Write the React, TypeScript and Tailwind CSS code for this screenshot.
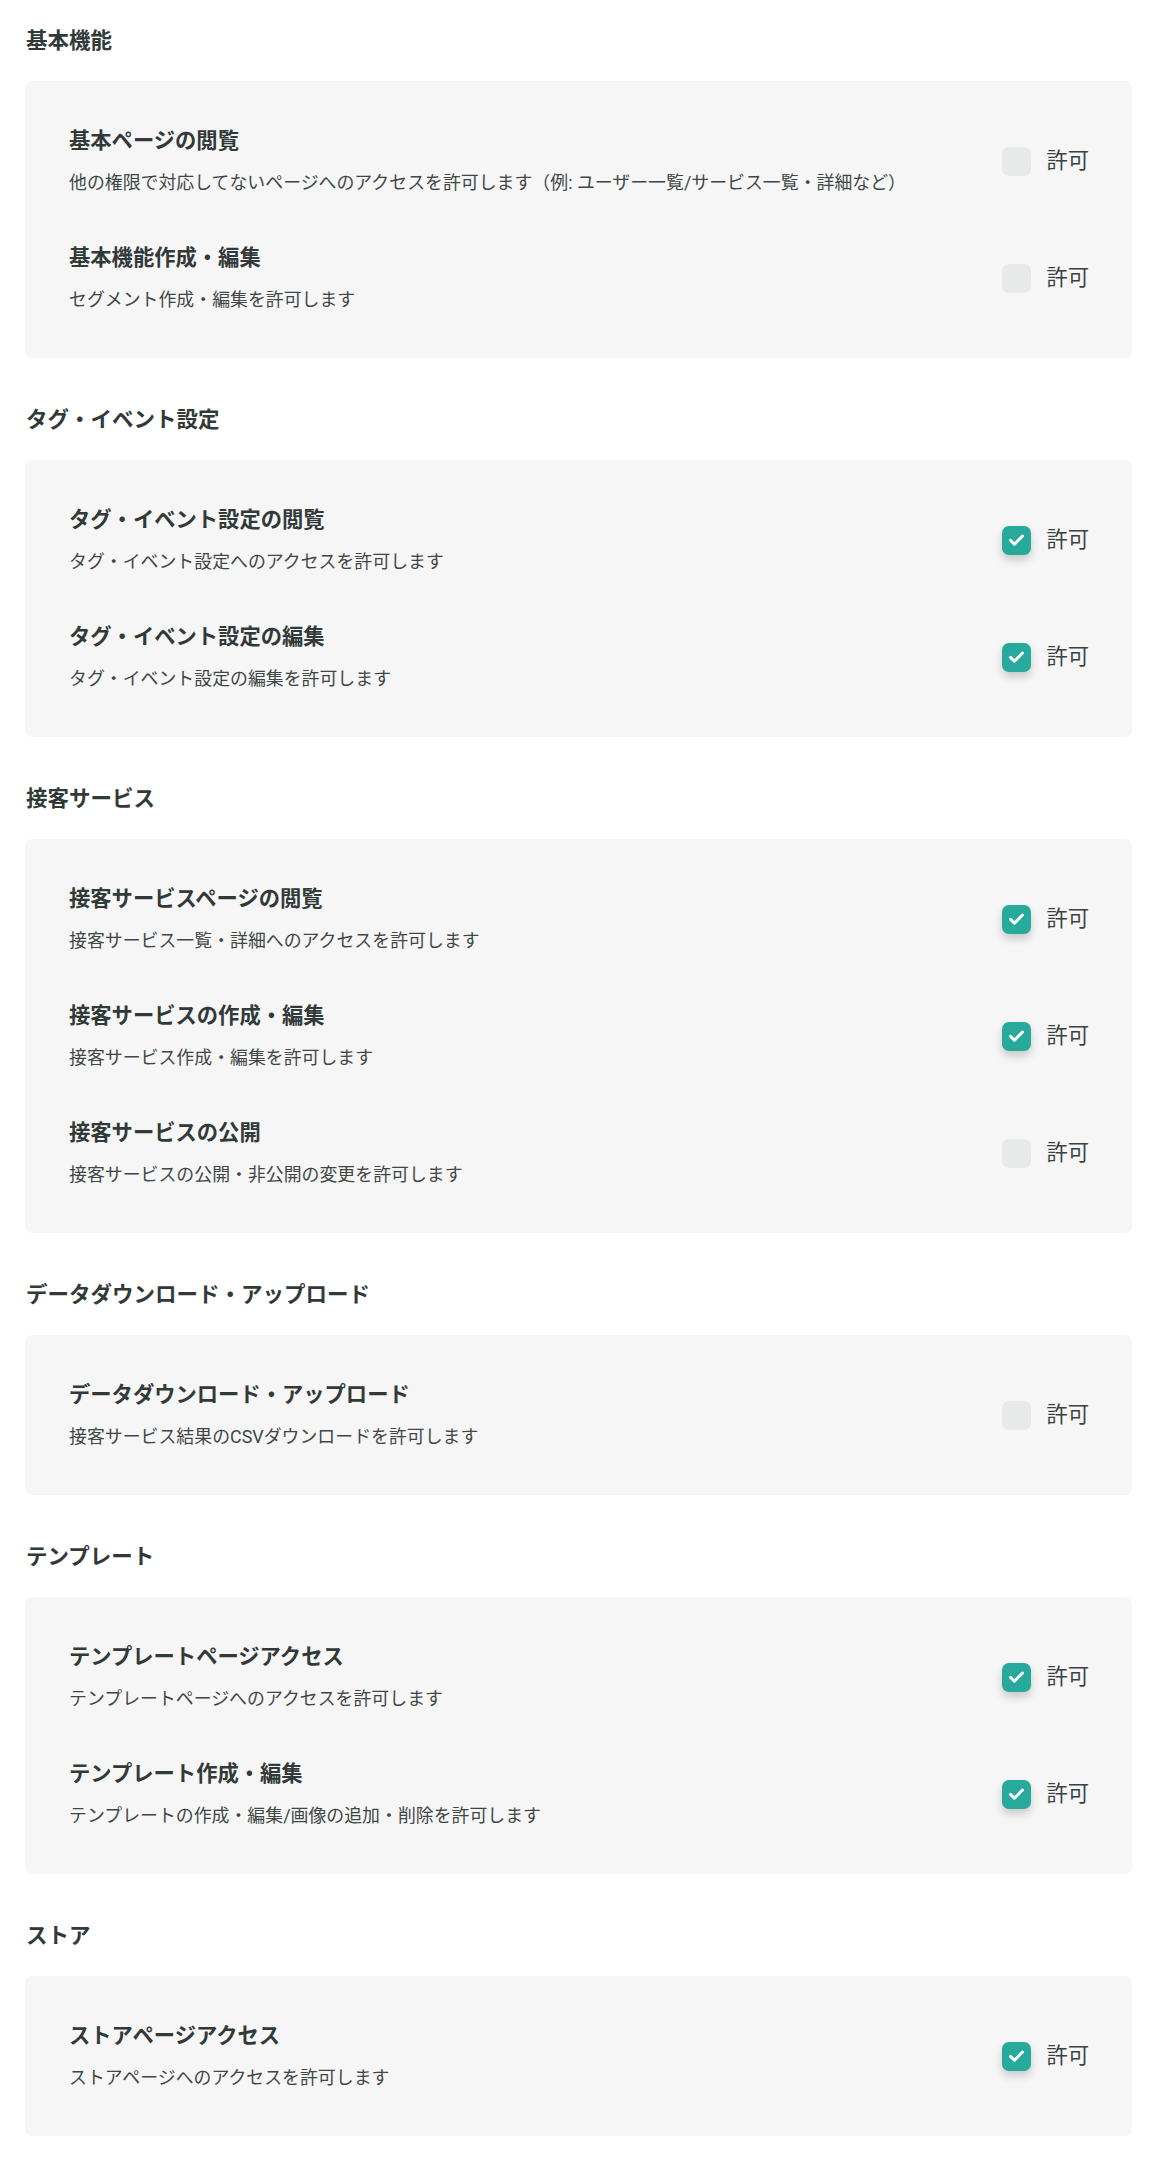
import React from "react";

type Perm = { title: string; desc: string; checked: boolean };
type Section = { name: string; perms: Perm[] };

const sections: Section[] = [
  {
    name: "基本機能",
    perms: [
      {
        title: "基本ページの閲覧",
        desc: "他の権限で対応してないページへのアクセスを許可します（例: ユーザー一覧/サービス一覧・詳細など）",
        checked: false,
      },
      { title: "基本機能作成・編集", desc: "セグメント作成・編集を許可します", checked: false },
    ],
  },
  {
    name: "タグ・イベント設定",
    perms: [
      { title: "タグ・イベント設定の閲覧", desc: "タグ・イベント設定へのアクセスを許可します", checked: true },
      { title: "タグ・イベント設定の編集", desc: "タグ・イベント設定の編集を許可します", checked: true },
    ],
  },
  {
    name: "接客サービス",
    perms: [
      { title: "接客サービスページの閲覧", desc: "接客サービス一覧・詳細へのアクセスを許可します", checked: true },
      { title: "接客サービスの作成・編集", desc: "接客サービス作成・編集を許可します", checked: true },
      { title: "接客サービスの公開", desc: "接客サービスの公開・非公開の変更を許可します", checked: false },
    ],
  },
  {
    name: "データダウンロード・アップロード",
    perms: [
      {
        title: "データダウンロード・アップロード",
        desc: "接客サービス結果のCSVダウンロードを許可します",
        checked: false,
      },
    ],
  },
  {
    name: "テンプレート",
    perms: [
      { title: "テンプレートページアクセス", desc: "テンプレートページへのアクセスを許可します", checked: true },
      {
        title: "テンプレート作成・編集",
        desc: "テンプレートの作成・編集/画像の追加・削除を許可します",
        checked: true,
      },
    ],
  },
  {
    name: "ストア",
    perms: [{ title: "ストアページアクセス", desc: "ストアページへのアクセスを許可します", checked: true }],
  },
];

const Check: React.FC<{ checked: boolean }> = ({ checked }) =>
  checked ? (
    <span className="w-[29px] h-[29px] rounded-[7px] bg-[#27a99c] flex items-center justify-center shadow-[0_5px_8px_rgba(0,0,0,0.18)]">
      <svg width="17" height="14" viewBox="0 0 17 14" fill="none">
        <path d="M2.5 7.4l3.9 3.8L14.5 3" stroke="#fff" strokeWidth="3" strokeLinecap="round" strokeLinejoin="round" />
      </svg>
    </span>
  ) : (
    <span className="w-[29px] h-[29px] rounded-[7px] bg-[#e8e9e9]" />
  );

export default function App() {
  return (
    <div className="bg-white min-h-screen pl-[25px] pr-[30px] pt-[27px] pb-[26px] font-['Roboto','Noto_Sans_CJK_JP',sans-serif] text-[#323a39]">
      {sections.map((s) => (
        <section key={s.name} className="mb-[48px] last:mb-0">
          <h2 className="pl-px text-[21.5px] leading-[28px] font-bold mb-[26px]">{s.name}</h2>
          <div className="bg-[#f6f6f6] rounded-[7px] pl-[44px] pr-[43px] py-[46px] flex flex-col gap-[49px]">
            {s.perms.map((p) => (
              <div key={p.title} className="flex items-center">
                <div className="flex-1 flex flex-col gap-[16px]">
                  <div className="text-[21.3px] leading-[28px] font-bold">{p.title}</div>
                  <div className="text-[17.9px] leading-[24px] text-[#3f4746]">{p.desc}</div>
                </div>
                <label className="flex items-center gap-[15px]">
                  <Check checked={p.checked} />
                  <span className="text-[21.3px] leading-[28px] text-[#3a4241]">許可</span>
                </label>
              </div>
            ))}
          </div>
        </section>
      ))}
    </div>
  );
}
